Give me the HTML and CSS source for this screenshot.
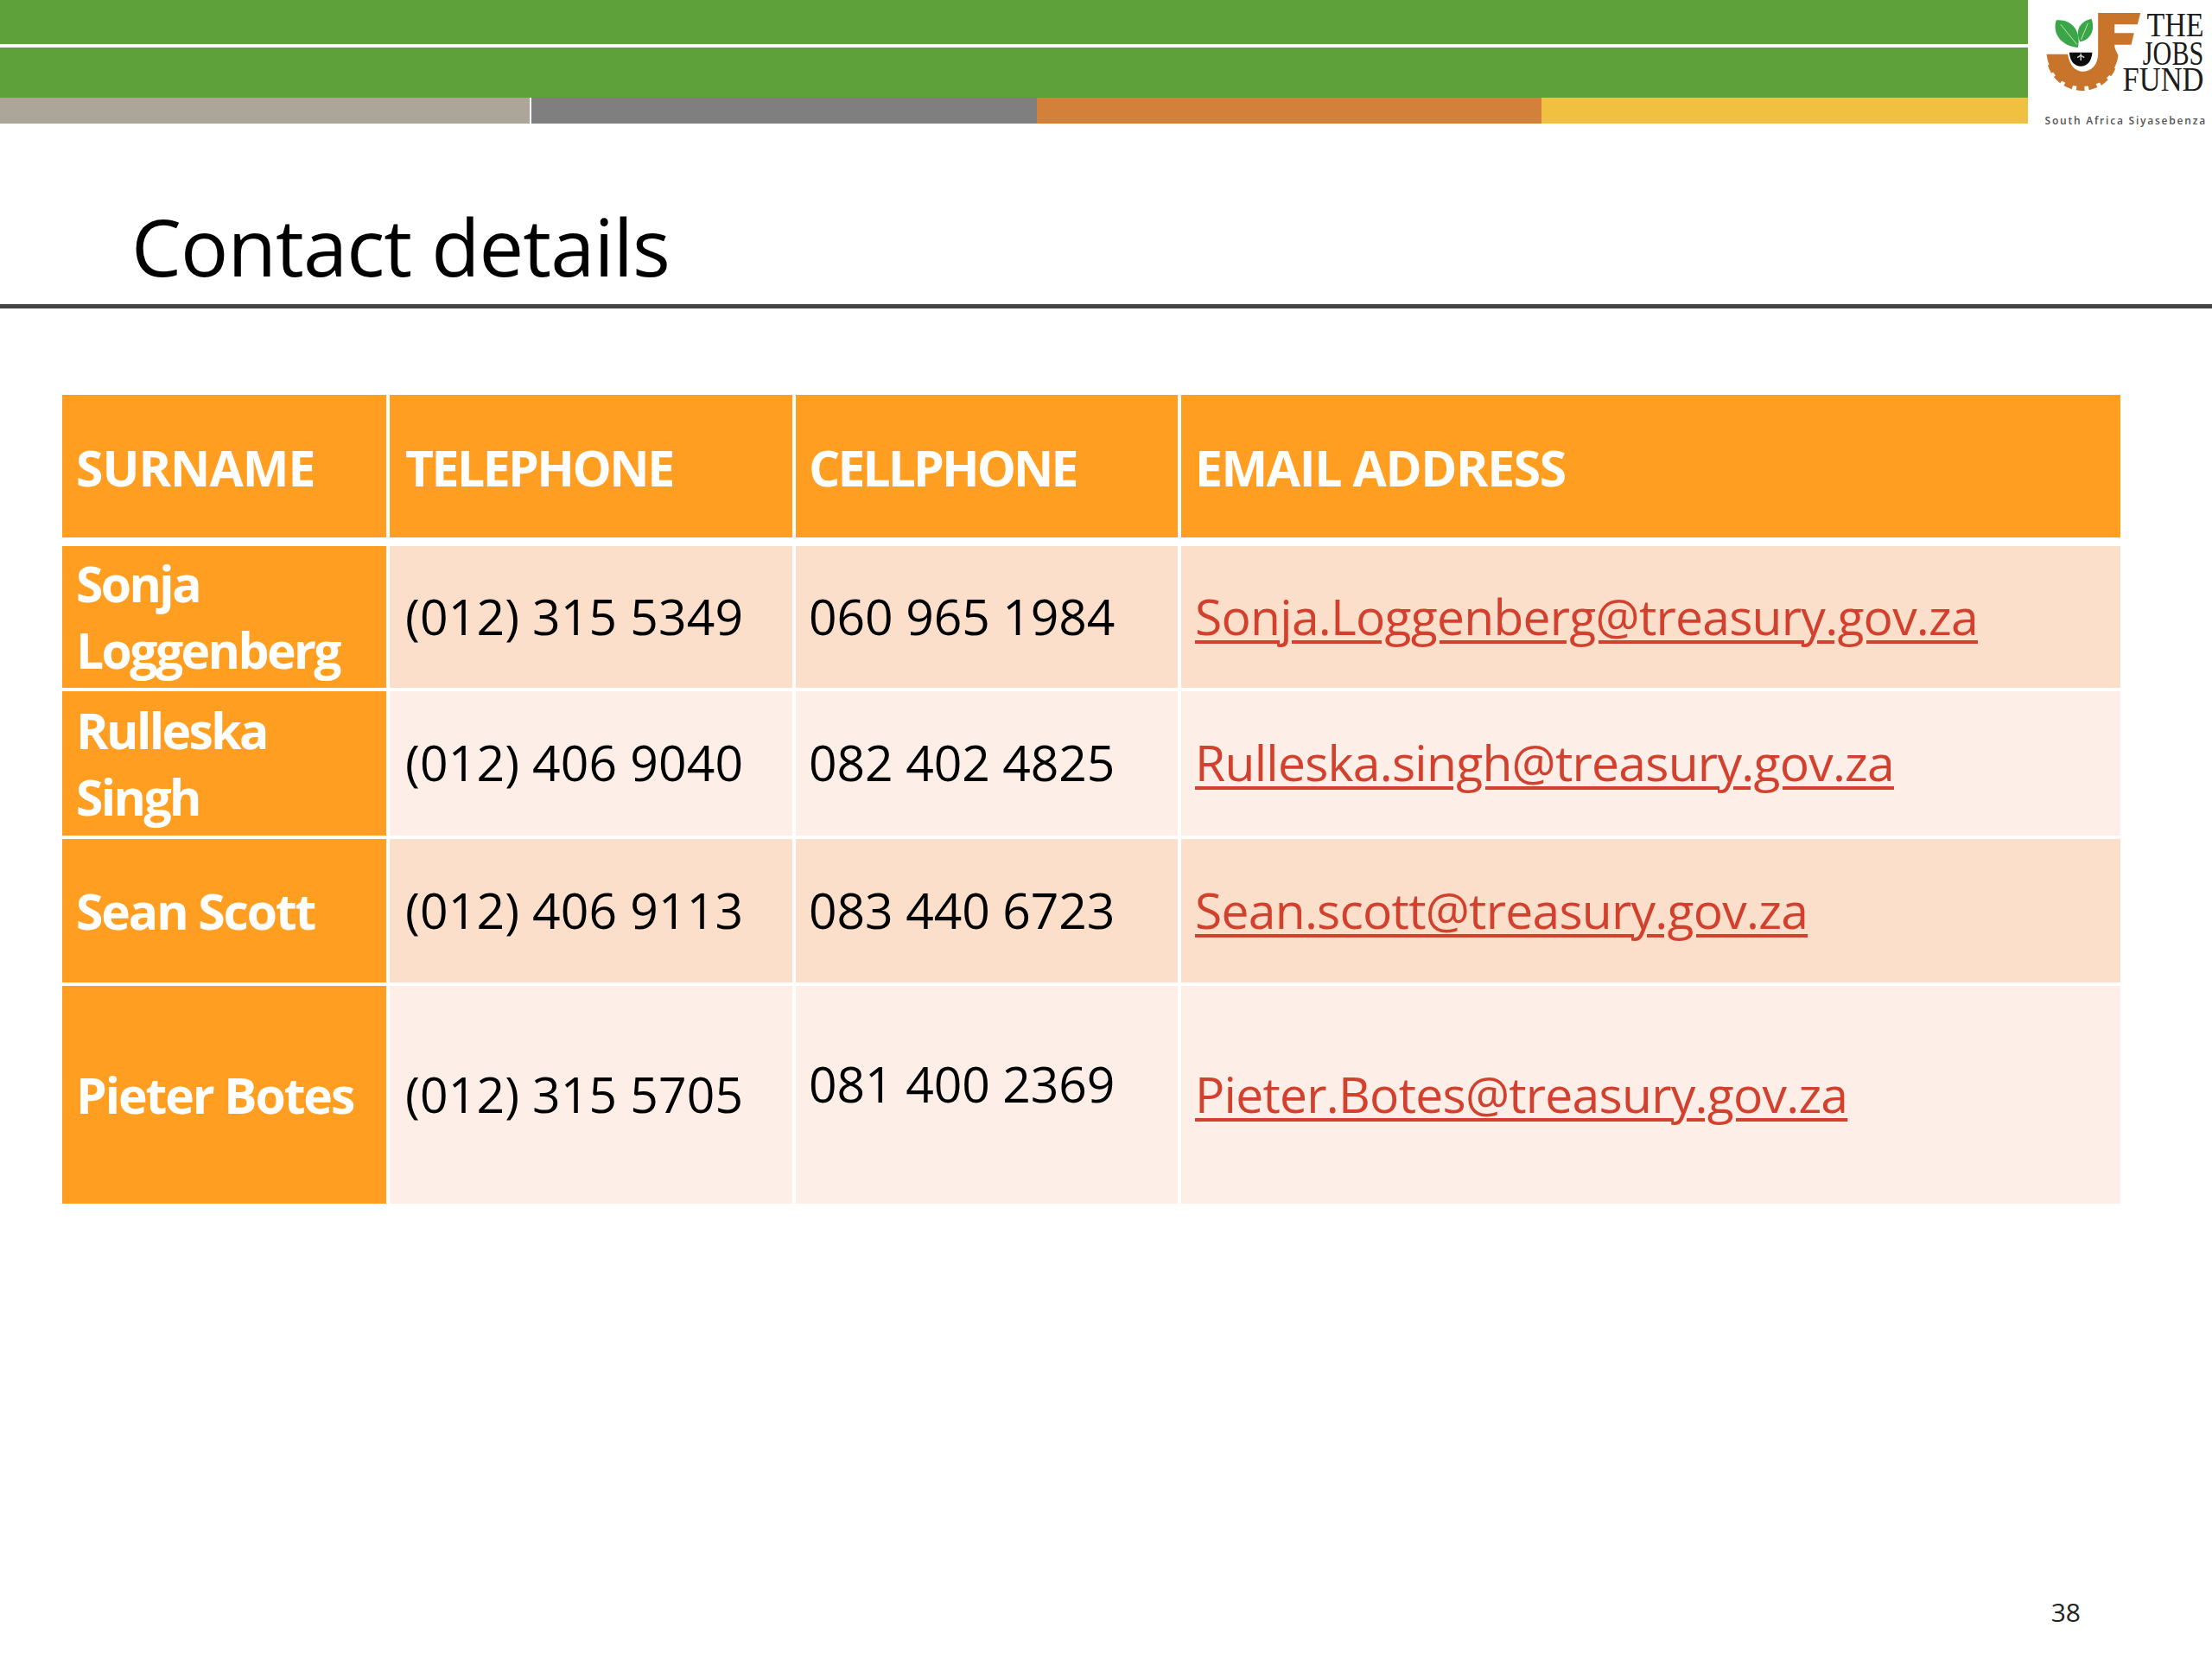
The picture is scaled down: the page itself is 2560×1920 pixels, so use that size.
FILE: index.html
```html
<!DOCTYPE html>
<html lang="en">
<head>
<meta charset="utf-8">
<title>Contact details</title>
<link rel="stylesheet" href="styles.css">
</head>
<body>
<div class="slide">
  <header class="banner">
    <div class="bars">
      <div class="green green-top"></div>
      <div class="green green-bottom"></div>
      <div class="strip">
        <div class="seg tan"></div>
        <div class="seg grey"></div>
        <div class="seg orange"></div>
        <div class="seg yellow"></div>
      </div>
    </div>
    <svg class="logo" viewBox="142 0 638 480" role="img" aria-label="The Jobs Fund">
      <path class="gear" d="M385 45H532L522 85H442V115H510L500 155H442C442 170 450 180 455 192C445 265 390 300 330 300C265 300 215 260 206 188L280 188C285 225 305 248 332 248C362 248 385 225 385 185Z"/>
      <path class="teeth" d="M220 223.5A115 115 0 0 0 440 223.5"/>
      <path class="leaf" d="M315 165C255 160 225 115 240 70C290 65 328 105 315 165Z"/>
      <path class="leaf" d="M322 145C305 105 320 75 362 65C375 100 362 138 322 145Z"/>
      <path class="vein" d="M255 85L312 155M350 80L326 138"/>
      <path class="soil" d="M285 182H365C362 215 345 230 325 230C305 230 288 215 285 182Z"/>
      <path class="root" d="M325 185V210M313 200L325 192L337 200"/>
      <text class="logo-name" transform="translate(554 125) scale(.864 1)">THE</text>
      <text class="logo-name" transform="translate(540 225) scale(.768 1)">JOBS</text>
      <text class="logo-name" transform="translate(470 315) scale(.878 1)">FUND</text>
      <text class="logo-tag" x="200" y="433" textLength="557">South Africa Siyasebenza</text>
    </svg>
  </header>

  <h1 class="title">Contact details</h1>

  <main class="contacts">
    <div class="cell head surname">SURNAME</div>
    <div class="cell head telephone">TELEPHONE</div>
    <div class="cell head cellphone">CELLPHONE</div>
    <div class="cell head email">EMAIL ADDRESS</div>

    <div class="cell name two-line">Sonja<br>Loggenberg</div>
    <div class="cell band telephone">(012) 315 5349</div>
    <div class="cell band cellphone">060 965 1984</div>
    <div class="cell band"><a href="#">Sonja.Loggenberg@treasury.gov.za</a></div>

    <div class="cell name two-line">Rulleska<br>Singh</div>
    <div class="cell pale telephone">(012) 406 9040</div>
    <div class="cell pale cellphone">082 402 4825</div>
    <div class="cell pale"><a href="#">Rulleska.singh@treasury.gov.za</a></div>

    <div class="cell name">Sean Scott</div>
    <div class="cell band telephone">(012) 406 9113</div>
    <div class="cell band cellphone">083 440 6723</div>
    <div class="cell band"><a href="#">Sean.scott@treasury.gov.za</a></div>

    <div class="cell name">Pieter Botes</div>
    <div class="cell pale telephone">(012) 315 5705</div>
    <div class="cell pale cellphone raised">081 400 2369</div>
    <div class="cell pale"><a href="#">Pieter.Botes@treasury.gov.za</a></div>
  </main>

  <footer class="page-number">38</footer>
</div>
</body>
</html>
```
FILE: styles.css
```css
* { box-sizing: border-box; }
html, body { margin: 0; background: #fff; }
.slide {
  width: 2560px;
  height: 1920px;
  display: flex;
  flex-direction: column;
  font-family: "Open Sans", "Liberation Sans", sans-serif;
  color: #000;
  overflow: hidden;
}
.banner { display: flex; height: 160px; }
.bars { width: 2347px; display: flex; flex-direction: column; }
.green { background: #5ea03a; }
.green-top { height: 51px; }
.green-bottom { height: 58px; margin-top: 4px; }
.strip { display: flex; height: 30px; }
.seg { height: 100%; }
.tan { width: 613px; background: #ada49a; }
.grey { width: 585px; margin-left: 2px; background: #7f7f7f; }
.orange { width: 584px; background: #d2803a; }
.yellow { flex: 1; background: #f0c040; }
.logo { width: 213px; height: 160px; flex: none; }
.gear { fill: #c8742a; }
.teeth { fill: none; stroke: #c8742a; stroke-width: 20; stroke-dasharray: 28 14; }
.leaf { fill: #3aa648; }
.vein { fill: none; stroke: #bfe3b8; stroke-width: 3; }
.soil { fill: #0c0c0c; }
.root { fill: none; stroke: #ddd; stroke-width: 4; }
.logo-name { font-family: "Liberation Serif", serif; font-size: 118px; fill: #1c1c1c; }
.logo-tag { font-family: "Open Sans", sans-serif; font-size: 36px; font-weight: 600; fill: #555; }

.title {
  margin: 66px 0 0;
  padding: 0 0 0 152px;
  height: 131px;
  font-size: 92px;
  line-height: 118px;
  font-weight: 400;
  letter-spacing: -0.9px;
  border-bottom: 5px solid #444;
}
.contacts {
  margin: 100px 0 0 72px;
  width: 2382px;
  display: grid;
  grid-template-columns: 375px 466px 442px 1fr;
  grid-template-rows: 171px 164px 167px 166px 252px;
  column-gap: 4px;
  row-gap: 4px;
  font-size: 57px;
  line-height: 77px;
}
.cell { display: flex; flex-direction: column; justify-content: center; padding: 0 16px; }
.telephone { padding-left: 18px; letter-spacing: 0.15px; }
.cellphone { padding-left: 15px; letter-spacing: -0.1px; }
.head, .name { background: #ff9e20; color: #fff; font-weight: 700; }
.head { padding-top: 3px; margin-bottom: 6px; height: 165px; }
.head.surname { letter-spacing: -1px; }
.head.telephone { letter-spacing: -2.5px; }
.head.cellphone { letter-spacing: -2.9px; }
.head.email { letter-spacing: -1.4px; }
.name { display: block; align-content: center; letter-spacing: -2.1px; }
.name.two-line { letter-spacing: -2.6px; }
.band, .pale { padding-bottom: 2px; }
.band { background: #fbdfcb; }
.pale { background: #fdeee7; }
.cell.raised { padding-bottom: 26px; }
.contacts a {
  color: #d2402e;
  letter-spacing: -0.75px;
  text-decoration: underline;
  text-decoration-thickness: 4px;
  text-underline-offset: 6px;
  align-self: flex-start;
}
.page-number {
  margin-top: auto;
  padding: 0 152px 34px 0;
  text-align: right;
  font-size: 30px;
  line-height: 40px;
  color: #222;
}
```
